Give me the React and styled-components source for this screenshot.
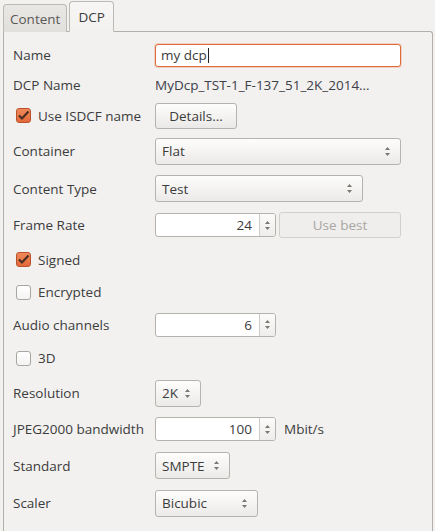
import React from 'react';
import styled, { createGlobalStyle } from 'styled-components';

const GlobalStyle = createGlobalStyle`
  html, body {
    margin: 0;
    padding: 0;
    background: #f2f1f0;
    font-family: 'Open Sans', 'Noto Sans', sans-serif;
    font-size: 13.5px;
    color: #3c3c3c;
  }
`;

const Window = styled.div`
  width: 435px;
  height: 531px;
  overflow: hidden;
  padding: 2px 2px 0 3px;
  box-sizing: border-box;
`;

const TabBar = styled.div`
  display: flex;
  align-items: flex-end;
  height: 30px;
  gap: 2px;
  position: relative;
  z-index: 1;
  margin-bottom: -1px;
`;

const Tab = styled.div`
  box-sizing: border-box;
  height: ${(p) => (p.active ? '31px' : '28px')};
  padding: 0 ${(p) => (p.active ? '8px' : '6px')};
  display: flex;
  align-items: center;
  border: 1px solid #bdb9b4;
  border-bottom: ${(p) => (p.active ? '1px solid #f2f1f0' : 'none')};
  border-radius: 4px 4px 0 0;
  background: ${(p) =>
    p.active ? 'linear-gradient(#f7f6f5, #f2f1f0)' : 'linear-gradient(#e9e7e4, #e2e0dd)'};
  color: ${(p) => (p.active ? '#3c3c3c' : '#5a5855')};
`;

const Panel = styled.div`
  border: 1px solid #b3afaa;
  border-bottom: none;
  border-radius: 0 3px 0 0;
  height: 600px;
  padding: 8px 0 0 9px;
  box-sizing: border-box;
`;

const Row = styled.div`
  display: flex;
  align-items: center;
  height: ${(p) => p.h}px;
`;

const Label = styled.div`
  width: 142px;
  flex: none;
  white-space: nowrap;
`;

const Value = styled.div`
  white-space: nowrap;
  color: #3d4048;
`;

const LineEdit = styled.div`
  box-sizing: border-box;
  width: 246px;
  height: 23px;
  border: 1px solid #df6a35;
  border-radius: 3px;
  background: #fff;
  box-shadow: 0 0 0 1px rgba(233, 120, 70, 0.25);
  display: flex;
  align-items: center;
  padding-left: 5px;
`;

const Caret = styled.span`
  display: inline-block;
  width: 1px;
  height: 15px;
  background: #222;
  margin-left: 1px;
`;

const PushButton = styled.div`
  box-sizing: border-box;
  width: ${(p) => p.w}px;
  height: 26px;
  border: 1px solid ${(p) => (p.disabled ? '#d3d0cc' : '#b6b2ad')};
  border-radius: 3px;
  background: ${(p) =>
    p.disabled ? '#efeeec' : 'linear-gradient(#fdfdfc, #ebe9e7)'};
  color: ${(p) => (p.disabled ? '#a8a6a3' : '#3c3c3c')};
  display: flex;
  align-items: center;
  justify-content: center;
  margin-left: ${(p) => p.ml || 0}px;
`;

const Combo = styled.div`
  box-sizing: border-box;
  width: ${(p) => p.w}px;
  height: 27px;
  border: 1px solid #b6b2ad;
  border-radius: 3px;
  background: linear-gradient(#fdfdfc, #eceae8);
  display: flex;
  align-items: center;
  justify-content: space-between;
  padding: 0 9px 0 6px;
`;

const CheckRow = styled.div`
  display: flex;
  align-items: center;
  padding-left: 3px;
  gap: 7px;
`;

const Box = styled.div`
  box-sizing: border-box;
  width: 15px;
  height: 15px;
  border-radius: 3px;
  border: 1px solid ${(p) => (p.checked ? '#b9522a' : '#a9a5a0')};
  background: ${(p) =>
    p.checked ? 'linear-gradient(#f08a5a, #e2683a)' : 'linear-gradient(#ffffff, #f4f3f2)'};
  display: flex;
  align-items: center;
  justify-content: center;
`;

const SpinBox = styled.div`
  box-sizing: border-box;
  width: 121px;
  height: 24px;
  border: 1px solid #b6b2ad;
  border-radius: 3px;
  background: #fff;
  display: flex;
  overflow: hidden;
`;

const SpinText = styled.div`
  flex: 1;
  display: flex;
  align-items: center;
  justify-content: flex-end;
  padding-right: 7px;
`;

const SpinButtons = styled.div`
  width: 15px;
  border-left: 1px solid #cfccc8;
  background: linear-gradient(#fbfbfa, #eeedeb);
  display: flex;
  align-items: center;
  justify-content: center;
`;

const Unit = styled.span`
  margin-left: 8px;
`;

const Arrows = () => (
  <svg width="7" height="11" viewBox="0 0 7 11">
    <path d="M3.5 1 L6 4 L1 4 Z" fill="#7a7773" />
    <path d="M3.5 10 L6 7 L1 7 Z" fill="#7a7773" />
  </svg>
);

const Check = ({ checked }) => (
  <Box checked={checked}>
    {checked && (
      <svg width="13" height="11" viewBox="0 0 13 11">
        <path d="M2 5.5 L5 8.5 L11.5 1.5" stroke="#4a2e22" strokeWidth="2.2" fill="none" />
      </svg>
    )}
  </Box>
);

const Spin = ({ value, unit }) => (
  <>
    <SpinBox>
      <SpinText>{value}</SpinText>
      <SpinButtons>
        <Arrows />
      </SpinButtons>
    </SpinBox>
    {unit && <Unit>{unit}</Unit>}
  </>
);

const Select = ({ w, children }) => (
  <Combo w={w}>
    <span>{children}</span>
    <Arrows />
  </Combo>
);

export default function App() {
  return (
    <Window>
      <GlobalStyle />
      <TabBar>
        <Tab>Content</Tab>
        <Tab active>DCP</Tab>
      </TabBar>
      <Panel>
        <Row h={30}>
          <Label>Name</Label>
          <LineEdit>
            my dcp<Caret />
          </LineEdit>
        </Row>
        <Row h={29}>
          <Label>DCP Name</Label>
          <Value>MyDcp_TST-1_F-137_51_2K_2014…</Value>
        </Row>
        <Row h={33}>
          <Label>
            <CheckRow>
              <Check checked />
              Use ISDCF name
            </CheckRow>
          </Label>
          <PushButton w={82}>Details...</PushButton>
        </Row>
        <Row h={38}>
          <Label>Container</Label>
          <Select w={246}>Flat</Select>
        </Row>
        <Row h={37}>
          <Label>Content Type</Label>
          <Select w={208}>Test</Select>
        </Row>
        <Row h={36}>
          <Label>Frame Rate</Label>
          <Spin value="24" />
          <PushButton w={122} ml={3} disabled>
            Use best
          </PushButton>
        </Row>
        <Row h={33}>
          <CheckRow>
            <Check checked />
            Signed
          </CheckRow>
        </Row>
        <Row h={32}>
          <CheckRow>
            <Check />
            Encrypted
          </CheckRow>
        </Row>
        <Row h={33}>
          <Label>Audio channels</Label>
          <Spin value="6" />
        </Row>
        <Row h={34}>
          <CheckRow>
            <Check />
            3D
          </CheckRow>
        </Row>
        <Row h={36}>
          <Label>Resolution</Label>
          <Select w={46}>2K</Select>
        </Row>
        <Row h={36}>
          <Label>JPEG2000 bandwidth</Label>
          <Spin value="100" unit="Mbit/s" />
        </Row>
        <Row h={37}>
          <Label>Standard</Label>
          <Select w={75}>SMPTE</Select>
        </Row>
        <Row h={38}>
          <Label>Scaler</Label>
          <Select w={103}>Bicubic</Select>
        </Row>
      </Panel>
    </Window>
  );
}
